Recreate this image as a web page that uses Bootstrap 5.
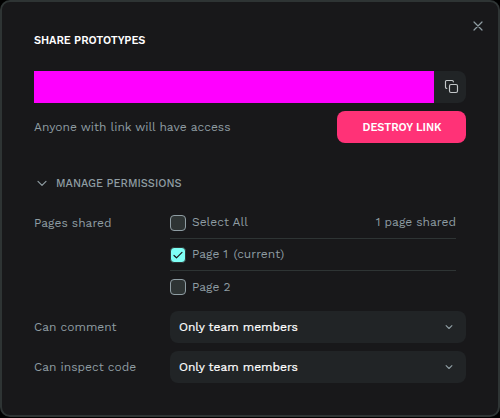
<!DOCTYPE html>
<html lang="en">
<head>
<meta charset="utf-8">
<meta name="viewport" content="width=device-width, initial-scale=1">
<title>Share prototypes</title>
<link href="https://cdn.jsdelivr.net/npm/bootstrap@5.3.0/dist/css/bootstrap.min.css" rel="stylesheet">
<style>
  body { background: #000; color: #8f9da3; font: 400 12px/16px "Work Sans", Inter, "Liberation Sans", sans-serif; overflow: hidden; }
  .share-dialog { height: 417px; background: #18181a; border: 2px solid #2e3434; border-radius: 10px; padding: 30px 32px; }
  .heading { font-size: 11px; line-height: 16px; font-weight: 600; letter-spacing: -.05px; color: #fff; height: 39px; padding-top: 1px; }
  .close-btn { top: 18px; right: 14px; width: 12px; height: 12px; line-height: 0; color: #8f9da3; }
  .link-field { height: 32px; background: #f0f; }
  .copy-btn { width: 32px; height: 32px; background: #212426; border-radius: 0 8px 8px 0; color: #c4c8ca; }
  .copy-btn.btn { padding: 0 0 0 4px; }
  .destroy-btn, .destroy-btn:hover { width: 129px; height: 32px; background: #ff3277; color: #fff; border: 0; border-radius: 8px; font-size: 11px; font-weight: 600; letter-spacing: -.05px; line-height: 16px; }
  .destroy-btn.btn { padding: 1px 0 0 1px; }
  .permissions-toggle { font-size: 11px; font-weight: 500; margin-top: 32px; gap: 8px; padding-left: 2px; }
  .permissions-toggle span { padding-top: 1px; margin-bottom: -1px; }
  .permissions { margin-top: 16px; }
  .field-label { width: 136px; }
  .pages { width: 286px; }
  .page-row { height: 32px; border-bottom: 1px solid #2e3434; gap: 6px; }
  .page-row:last-child { border-bottom: 0; }
  .page-row:not(:last-child) > :not(input) { padding-bottom: 2px; }
  .current-note { margin-left: 1.5px; }
  .page-row .form-check-input { width: 16px; height: 16px; margin: 0; border: 1px solid #8f9da3; background-color: #2e3434; border-radius: 4px; box-shadow: none; }
  .page-row .form-check-input:checked { border-color: #2e3434; background-color: #7efff5; background-size: 12px 12px;
    background-image: url("data:image/svg+xml,%3csvg xmlns='http://www.w3.org/2000/svg' viewBox='0 0 12 12'%3e%3cpath fill='none' stroke='%2318181a' stroke-linecap='round' stroke-linejoin='round' stroke-width='1.2' d='M2 6.5 4.5 8.8 10 3.3'/%3e%3c/svg%3e"); }
  .choice { height: 32px; background: #212426; color: #fff; border-radius: 8px; padding: 0 13px 0 9px; -webkit-text-stroke: .2px #fff; }
</style>
</head>
<body>
<main class="share-dialog position-relative">
  <button class="close-btn btn p-0 border-0 position-absolute" aria-label="Close">
    <svg width="12" height="12" viewBox="0 0 12 12" fill="none" stroke="currentColor" stroke-width="1.2" stroke-linecap="round"><path d="M2 2l8 8M10 2l-8 8"/></svg>
  </button>
  <h1 class="heading mb-0">SHARE PROTOTYPES</h1>
  <div class="d-flex">
    <div class="link-field flex-grow-1"></div>
    <button class="copy-btn btn border-0 d-flex align-items-center justify-content-center" aria-label="Copy link">
      <svg width="16" height="16" viewBox="0 0 16 16" fill="none" stroke="currentColor" stroke-width="1.15" stroke-linecap="round" stroke-linejoin="round"><rect x="5.5" y="5.5" width="8" height="8" rx="1.5"/><path d="M2.8 9.3h-.3a1 1 0 0 1-1-1V2.5a1 1 0 0 1 1-1h5.8a1 1 0 0 1 1 1v.3"/></svg>
    </button>
  </div>
  <div class="d-flex align-items-center justify-content-between mt-2">
    <span>Anyone with link will have access</span>
    <button class="destroy-btn btn">DESTROY LINK</button>
  </div>
  <div class="permissions-toggle d-flex align-items-center">
    <svg width="12" height="12" viewBox="0 0 12 12" fill="none" stroke="currentColor" stroke-width="1.2" stroke-linecap="round" stroke-linejoin="round"><path d="M2 4.3l4 4 4-4"/></svg>
    <span>MANAGE PERMISSIONS</span>
  </div>
  <div class="permissions">
    <div class="d-flex">
      <div class="field-label pt-2">Pages shared</div>
      <div class="pages">
        <div class="page-row d-flex align-items-center">
          <input class="form-check-input" type="checkbox" id="all"><label for="all">Select All</label>
          <span class="ms-auto">1 page shared</span>
        </div>
        <div class="page-row d-flex align-items-center">
          <input class="form-check-input" type="checkbox" id="p1" checked><label for="p1">Page 1 <span class="current-note">(current)</span></label>
        </div>
        <div class="page-row d-flex align-items-center">
          <input class="form-check-input" type="checkbox" id="p2"><label for="p2">Page 2</label>
        </div>
      </div>
    </div>
    <div class="d-flex align-items-center mt-2">
      <div class="field-label">Can comment</div>
      <div class="choice flex-grow-1 d-flex align-items-center justify-content-between"><span>Only team members</span>
        <svg width="8" height="8" viewBox="0 0 8 8" fill="none" stroke="#8f9da3" stroke-width="1.1" stroke-linecap="round" stroke-linejoin="round"><path d="M1.1 2.6L4 5.5l2.9-2.9"/></svg></div>
    </div>
    <div class="d-flex align-items-center mt-2">
      <div class="field-label">Can inspect code</div>
      <div class="choice flex-grow-1 d-flex align-items-center justify-content-between"><span>Only team members</span>
        <svg width="8" height="8" viewBox="0 0 8 8" fill="none" stroke="#8f9da3" stroke-width="1.1" stroke-linecap="round" stroke-linejoin="round"><path d="M1.1 2.6L4 5.5l2.9-2.9"/></svg></div>
    </div>
  </div>
</main>
<script src="https://cdn.jsdelivr.net/npm/bootstrap@5.3.0/dist/js/bootstrap.bundle.min.js"></script>
</body>
</html>
